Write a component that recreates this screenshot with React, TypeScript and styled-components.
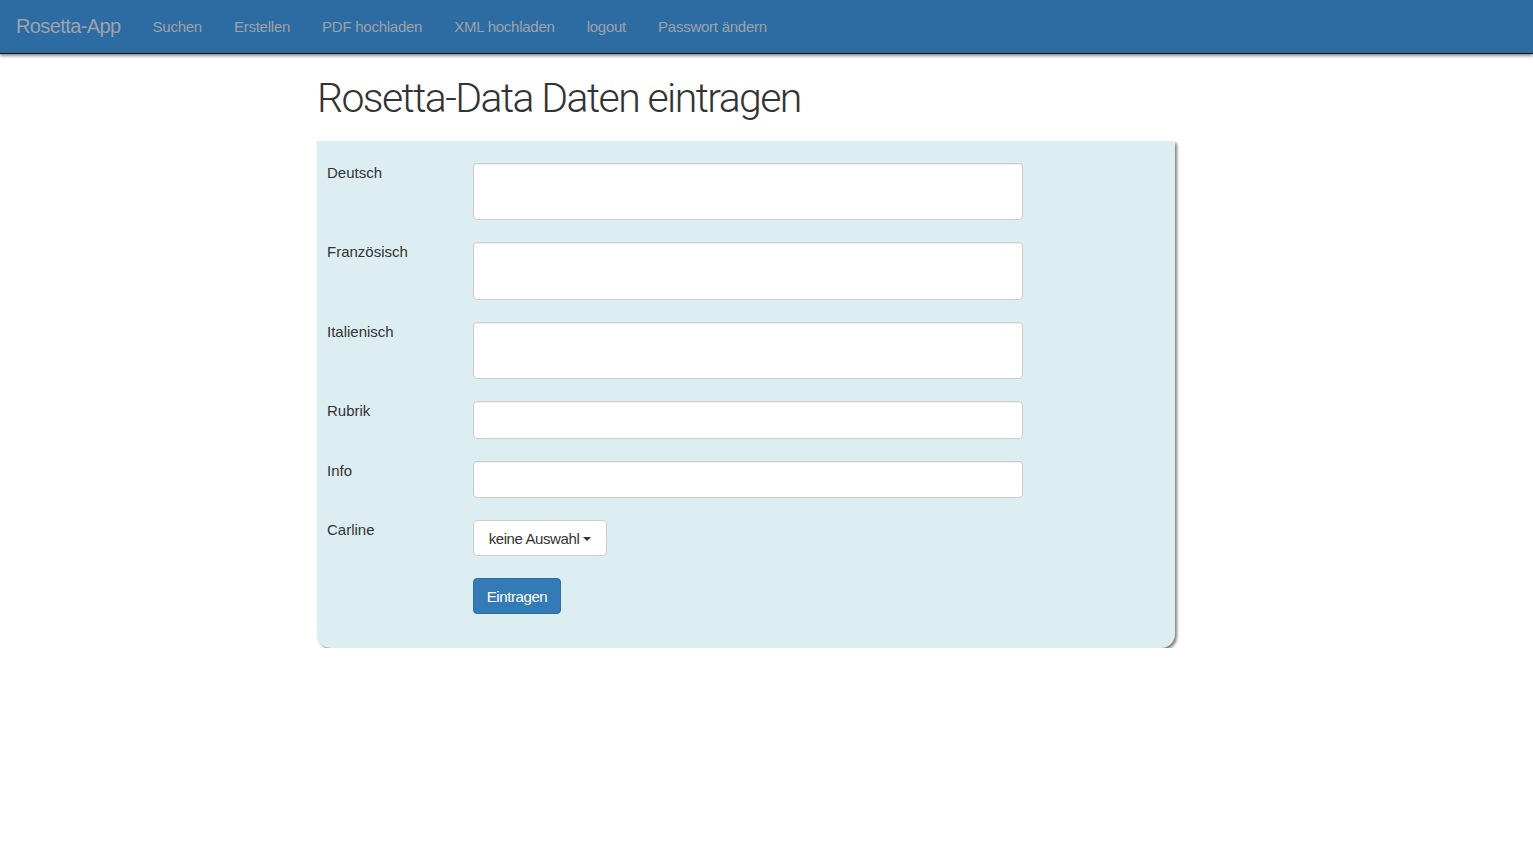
import React from "react";
import styled, { createGlobalStyle } from "styled-components";

const Global = createGlobalStyle`
  html, body { margin: 0; padding: 0; background: #fff; }
  body { font-family: "Liberation Sans", Arial, sans-serif; color: #333; }
  * { box-sizing: border-box; }
`;

const NavBar = styled.nav`
  height: 54px;
  background: #2d6ca3;
  border-bottom: 1px solid #111;
  box-shadow: 0 2px 3px rgba(0, 0, 0, 0.45);
  display: flex;
  align-items: center;
  padding-left: 16px;
`;

const Brand = styled.a`
  font-size: 20px;
  letter-spacing: -0.6px;
  color: #9da3a9;
  margin-right: 16px;
  text-decoration: none;
  padding-bottom: 1px;
`;

const NavLink = styled.a`
  font-size: 15px;
  letter-spacing: -0.25px;
  color: #9da3a9;
  padding: 0 16px;
  text-decoration: none;
`;

const Main = styled.main`
  padding-left: 317px;
  width: 1175px;
`;

const Title = styled.h1`
  margin: 20px 0 19px;
  font-family: "Roboto", "Liberation Sans", sans-serif;
  font-weight: 300;
  font-size: 41px;
  line-height: 48px;
  letter-spacing: -1.6px;
  color: #333;
`;

const Panel = styled.form`
  width: 858px;
  background: #ddeef2;
  border-radius: 0 0 14px 14px;
  box-shadow: 2px 2px 3px rgba(0, 0, 0, 0.5);
  padding: 22px 10px 34px;
  display: flex;
  flex-direction: column;
  gap: 22px;
`;

const Row = styled.div`
  display: grid;
  grid-template-columns: 146px 550px;
  align-items: start;
`;

const Label = styled.label`
  font-size: 15px;
  letter-spacing: 0;
  line-height: 20px;
  color: #333;
`;

const Field = styled.input<{ $h: number }>`
  width: 550px;
  height: ${(p) => p.$h}px;
  border: 1px solid #ccc;
  border-radius: 4px;
  background: #fff;
  box-shadow: inset 0 1px 1px rgba(0, 0, 0, 0.06);
  outline: none;
`;

const SelectBtn = styled.button`
  height: 36px;
  width: 134px;
  background: #fff;
  border: 1px solid #ccc;
  border-radius: 4px;
  font-family: "Liberation Sans", Arial, sans-serif;
  font-size: 15px;
  letter-spacing: -0.4px;
  color: #333;
  display: flex;
  align-items: center;
  justify-content: center;
  gap: 4px;
  padding: 0;
`;

const Caret = styled.span`
  width: 0;
  height: 0;
  border-left: 4px solid transparent;
  border-right: 4px solid transparent;
  border-top: 4px solid #333;
  margin-top: 2px;
`;

const SubmitBtn = styled.button`
  height: 36px;
  width: 88px;
  background: #337ab7;
  border: 1px solid #2e6da4;
  border-radius: 4px;
  color: #fff;
  font-family: "Liberation Sans", Arial, sans-serif;
  font-size: 15px;
  letter-spacing: -0.4px;
  padding: 0;
`;

const fields: { label: string; h: number }[] = [
  { label: "Deutsch", h: 57 },
  { label: "Französisch", h: 58 },
  { label: "Italienisch", h: 57 },
  { label: "Rubrik", h: 38 },
  { label: "Info", h: 37 },
];

export default function App() {
  return (
    <>
      <Global />
      <NavBar>
        <Brand>Rosetta-App</Brand>
        <NavLink>Suchen</NavLink>
        <NavLink>Erstellen</NavLink>
        <NavLink>PDF hochladen</NavLink>
        <NavLink>XML hochladen</NavLink>
        <NavLink>logout</NavLink>
        <NavLink>Passwort ändern</NavLink>
      </NavBar>
      <Main>
        <Title>Rosetta-Data Daten eintragen</Title>
        <Panel onSubmit={(e) => e.preventDefault()}>
          {fields.map((f) => (
            <Row key={f.label}>
              <Label>{f.label}</Label>
              <Field $h={f.h} />
            </Row>
          ))}
          <Row>
            <Label>Carline</Label>
            <div>
              <SelectBtn type="button">
                keine Auswahl <Caret />
              </SelectBtn>
            </div>
          </Row>
          <Row>
            <span />
            <div>
              <SubmitBtn type="submit">Eintragen</SubmitBtn>
            </div>
          </Row>
        </Panel>
      </Main>
    </>
  );
}
